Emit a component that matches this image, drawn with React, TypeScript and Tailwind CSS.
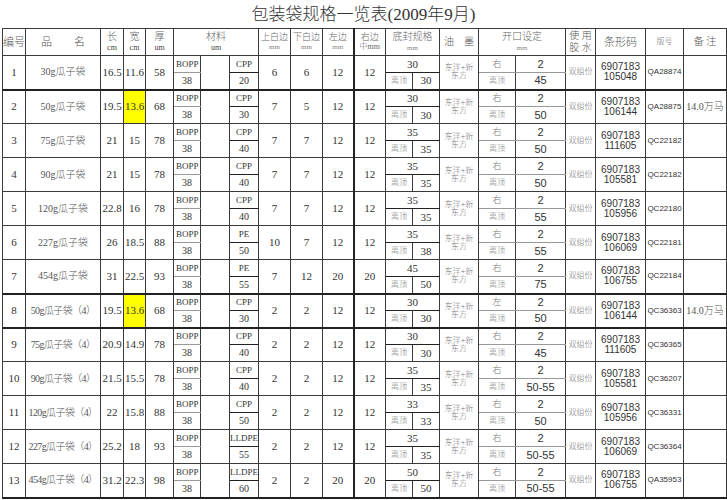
const rows = [
  { no: "1", name: "30g瓜子袋", l: "16.5", w: "11.6", hl: false, t: "58", mat: "CPP", matT: "20", top: "6", bot: "6", left: "12", right: "12", seal: "30", sealB: "30", dir: "右", open: "45", code: "105048", ver: "QA28874", note: "" },
  { no: "2", name: "50g瓜子袋", l: "19.5", w: "13.6", hl: true, t: "68", mat: "CPP", matT: "30", top: "7", bot: "5", left: "12", right: "12", seal: "30", sealB: "30", dir: "右", open: "50", code: "106144", ver: "QA28875", note: "14.0万马" },
  { no: "3", name: "75g瓜子袋", l: "21", w: "15", hl: false, t: "78", mat: "CPP", matT: "40", top: "7", bot: "7", left: "12", right: "12", seal: "35", sealB: "35", dir: "右", open: "50", code: "111605", ver: "QC22182", note: "" },
  { no: "4", name: "90g瓜子袋", l: "21", w: "15", hl: false, t: "78", mat: "CPP", matT: "40", top: "7", bot: "7", left: "12", right: "12", seal: "35", sealB: "35", dir: "右", open: "50", code: "105581", ver: "QC22182", note: "" },
  { no: "5", name: "120g瓜子袋", l: "22.8", w: "16", hl: false, t: "78", mat: "CPP", matT: "40", top: "7", bot: "7", left: "12", right: "12", seal: "35", sealB: "35", dir: "右", open: "55", code: "105956", ver: "QC22180", note: "" },
  { no: "6", name: "227g瓜子袋", l: "26", w: "18.5", hl: false, t: "88", mat: "PE", matT: "50", top: "10", bot: "7", left: "12", right: "12", seal: "35", sealB: "38", dir: "右", open: "55", code: "106069", ver: "QC22181", note: "" },
  { no: "7", name: "454g瓜子袋", l: "31", w: "22.5", hl: false, t: "93", mat: "PE", matT: "55", top: "7", bot: "12", left: "20", right: "20", seal: "45", sealB: "50", dir: "右", open: "75", code: "106755", ver: "QC22184", note: "" },
  { no: "8", name: "50g瓜子袋（4）", l: "19.5", w: "13.6", hl: true, t: "68", mat: "CPP", matT: "30", top: "2", bot: "2", left: "12", right: "12", seal: "30", sealB: "30", dir: "左", open: "50", code: "106144", ver: "QC36363", note: "14.0万马" },
  { no: "9", name: "75g瓜子袋（4）", l: "20.9", w: "14.9", hl: false, t: "78", mat: "CPP", matT: "40", top: "2", bot: "2", left: "12", right: "12", seal: "30", sealB: "30", dir: "右", open: "45", code: "111605", ver: "QC36365", note: "" },
  { no: "10", name: "90g瓜子袋（4）", l: "21.5", w: "15.5", hl: false, t: "78", mat: "CPP", matT: "40", top: "2", bot: "2", left: "12", right: "12", seal: "35", sealB: "35", dir: "右", open: "50-55", code: "105581", ver: "QC36207", note: "" },
  { no: "11", name: "120g瓜子袋（4）", l: "22", w: "15.8", hl: false, t: "88", mat: "CPP", matT: "50", top: "2", bot: "2", left: "12", right: "12", seal: "33", sealB: "33", dir: "右", open: "50", code: "105956", ver: "QC36331", note: "" },
  { no: "12", name: "227g瓜子袋（4）", l: "25.2", w: "18", hl: false, t: "93", mat: "LLDPE", matT: "55", top: "2", bot: "2", left: "12", right: "12", seal: "35", sealB: "35", dir: "右", open: "50-55", code: "106069", ver: "QC36364", note: "" },
  { no: "13", name: "454g瓜子袋（4）", l: "31.2", w: "22.3", hl: false, t: "98", mat: "LLDPE", matT: "60", top: "2", bot: "2", left: "20", right: "20", seal: "50", sealB: "50", dir: "右", open: "50-55", code: "106755", ver: "QA35953", note: "" },
];

const widths = [23, 75, 23, 22, 28, 27, 29, 29, 32, 32, 31, 32, 27, 27, 39, 37, 50, 30, 50, 38, 43];

export default function App() {
  const cell = "border border-[#3a3a3a] p-0 text-center align-middle leading-none";
  const small = "text-[8px] text-[#777]";
  const num = "text-[11px] text-[#333]";
  const head = "text-[9px] text-[#666]";

  return (
    <div className="w-[727px] h-[500px] bg-white overflow-hidden font-light font-['Liberation_Serif','Noto_Sans_CJK_SC',serif] text-[#333]">
      {/* Title */}
      <div className="h-[28px] flex items-center justify-center pt-[2px] text-[17px] text-[#333]">
        包装袋规格一览表(2009年9月)
      </div>

      <table className="ml-[2px] w-[724px] table-fixed border-collapse">
        <colgroup>
          {widths.map((w, i) => (
            <col key={i} style={{ width: w }} />
          ))}
        </colgroup>
        <thead>
          <tr className="h-[27px]">
            <th className={`${cell} font-light text-[11px] text-[#555]`}>编号</th>
            <th className={`${cell} font-light text-[11px] text-[#555]`}>品&emsp;&emsp;名</th>
            <th className={`${cell} font-light`}>
              <div className="text-[10px] text-[#666]">长</div>
              <div className="text-[8px] mt-[2px] text-[#444]">cm</div>
            </th>
            <th className={`${cell} font-light`}>
              <div className="text-[10px] text-[#666]">宽</div>
              <div className="text-[8px] mt-[2px] text-[#444]">cm</div>
            </th>
            <th className={`${cell} font-light`}>
              <div className="text-[10px] text-[#666]">厚</div>
              <div className="text-[8px] mt-[2px] text-[#444]">um</div>
            </th>
            <th colSpan={3} className={`${cell} font-light`}>
              <div className="text-[10px] text-[#666]">材料</div>
              <div className="text-[8px] mt-[2px] text-[#444]">um</div>
            </th>
            <th className={`${cell} font-light`}>
              <div className={head}>上白边</div>
              <div className="text-[7px] mt-[2px] text-[#888]">mm</div>
            </th>
            <th className={`${cell} font-light`}>
              <div className={head}>下白边</div>
              <div className="text-[7px] mt-[2px] text-[#888]">mm</div>
            </th>
            <th className={`${cell} font-light border-r-2 border-r-[#222]`}>
              <div className={head}>左边</div>
              <div className="text-[7px] mt-[2px] text-[#888]">mm</div>
            </th>
            <th className={`${cell} font-light`}>
              <div className={head}>右边</div>
              <div className="text-[8px] mt-[1px] text-[#666]">中mm</div>
            </th>
            <th colSpan={2} className={`${cell} font-light`}>
              <div className="text-[10px] text-[#666]">底封规格</div>
              <div className="text-[7px] mt-[3px] text-[#888]">mm</div>
            </th>
            <th className={`${cell} font-light text-[10px] text-[#555]`}>油&emsp;墨</th>
            <th colSpan={2} className={`${cell} font-light`}>
              <div className="text-[10px] text-[#666]">开口设定</div>
              <div className="text-[7px] mt-[3px] text-[#888]">mm</div>
            </th>
            <th className={`${cell} font-light`}>
              <div className="text-[10px] text-[#555]">使 用</div>
              <div className="text-[10px] mt-[2px] text-[#555]">胶 水</div>
            </th>
            <th className={`${cell} font-light text-[11px] text-[#555]`}>条形码</th>
            <th className={`${cell} font-light text-[8px] text-[#666]`}>版号</th>
            <th className={`${cell} font-light text-[10px] text-[#555]`}>备 注</th>
          </tr>
        </thead>
        <tbody>
          {rows.map((r, i) => {
            const thick = i === 0 || i === 6 || i === 7 || i === rows.length - 1;
            const bb = thick ? "border-b-2 border-b-[#222]" : "";
            const four = r.name.includes("（");
            return [
              <tr key={r.no + "a"} className="h-[17px]">
                <td rowSpan={2} className={`${cell} ${bb} ${num}`}>{r.no}</td>
                <td rowSpan={2} className={`${cell} ${bb} text-[#555] whitespace-nowrap ${four ? "text-[10px] tracking-[-0.6px]" : "text-[10px]"}`}>{r.name}</td>
                <td rowSpan={2} className={`${cell} ${bb} ${num}`}>{r.l}</td>
                <td rowSpan={2} className={`${cell} ${bb} ${num} ${r.hl ? "bg-[#ffff00]" : ""}`}>{r.w}</td>
                <td rowSpan={2} className={`${cell} ${bb} ${num}`}>{r.t}</td>
                <td className={`${cell} border-b-[#999] text-[9px] text-left pl-[2px]`}>BOPP</td>
                <td rowSpan={2} className={`${cell} ${bb}`}></td>
                <td className={`${cell} border-b-[#222] text-[9px]`}>{r.mat}</td>
                <td rowSpan={2} className={`${cell} ${bb} ${num}`}>{r.top}</td>
                <td rowSpan={2} className={`${cell} ${bb} ${num}`}>{r.bot}</td>
                <td rowSpan={2} className={`${cell} ${bb} ${num} border-r-2 border-r-[#222]`}>{r.left}</td>
                <td rowSpan={2} className={`${cell} ${bb} ${num}`}>{r.right}</td>
                <td colSpan={2} className={`${cell} border-b-[#222] ${num}`}>{r.seal}</td>
                <td rowSpan={2} className={`${cell} ${bb} ${small} leading-[12px]`}>
                  东洋+新
                  <br />
                  东方
                </td>
                <td className={`${cell} border-b-[#999] text-[9px] text-[#777]`}>{r.dir}</td>
                <td className={`${cell} border-b-[#999] text-[11px] font-['Liberation_Sans',sans-serif]`}>2</td>
                <td rowSpan={2} className={`${cell} ${bb} ${small}`}>双组份</td>
                <td rowSpan={2} className={`${cell} ${bb} text-[10px] leading-[13px] font-['Liberation_Sans',sans-serif]`}>
                  6907183
                  <br />
                  {r.code}
                </td>
                <td rowSpan={2} className={`${cell} ${bb} text-[8px] font-['Liberation_Sans',sans-serif]`}>{r.ver}</td>
                <td rowSpan={2} className={`${cell} ${bb} text-[10px] text-[#555]`}>{r.note}</td>
              </tr>,
              <tr key={r.no + "b"} className="h-[17px]">
                <td className={`${cell} ${bb} text-[10px]`}>38</td>
                <td className={`${cell} ${bb} text-[10px]`}>{r.matT}</td>
                <td className={`${cell} ${bb} ${small}`}>离顶</td>
                <td className={`${cell} ${bb} ${num}`}>{r.sealB}</td>
                <td className={`${cell} ${bb} ${small}`}>离顶</td>
                <td className={`${cell} ${bb} text-[11px] font-['Liberation_Sans',sans-serif]`}>{r.open}</td>
              </tr>,
            ];
          })}
        </tbody>
      </table>
    </div>
  );
}
